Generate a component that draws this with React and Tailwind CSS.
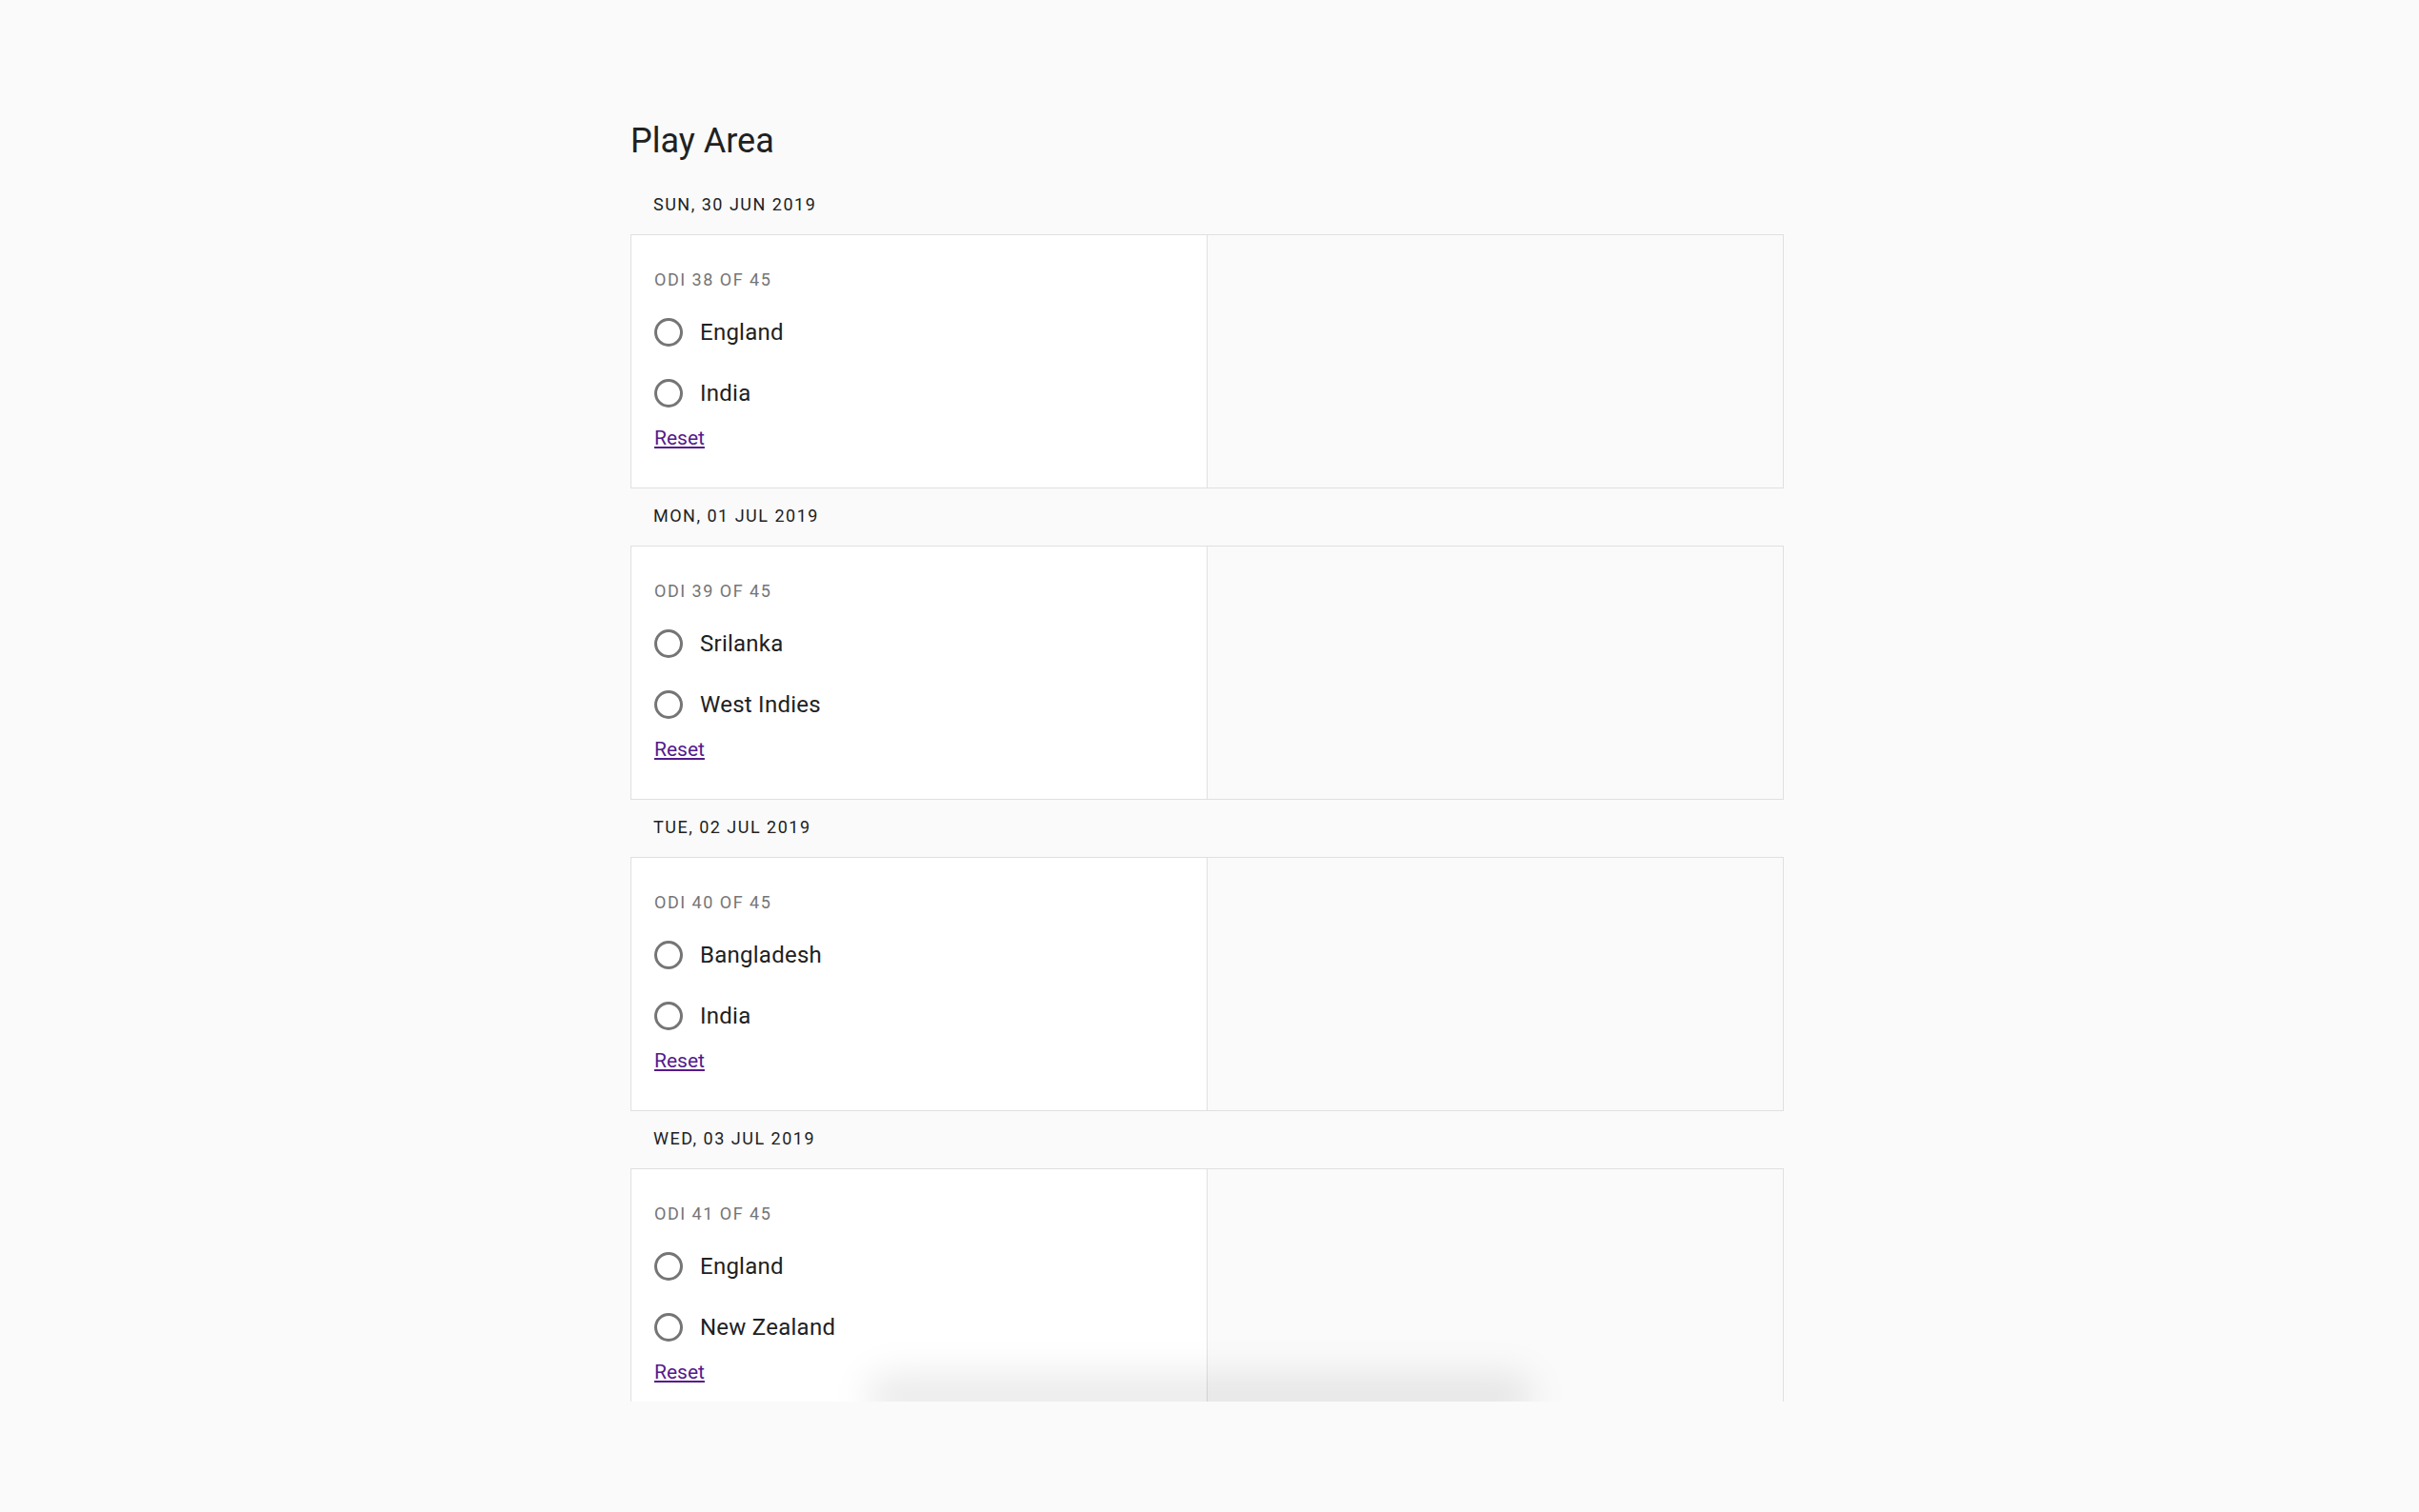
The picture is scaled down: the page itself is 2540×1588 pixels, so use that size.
import React from "react";

const matches = [
  { date: "SUN, 30 JUN 2019", odi: "ODI 38 OF 45", teams: ["England", "India"] },
  { date: "MON, 01 JUL 2019", odi: "ODI 39 OF 45", teams: ["Srilanka", "West Indies"] },
  { date: "TUE, 02 JUL 2019", odi: "ODI 40 OF 45", teams: ["Bangladesh", "India"] },
  { date: "WED, 03 JUL 2019", odi: "ODI 41 OF 45", teams: ["England", "New Zealand"] },
];

const Radio = ({ label }) => (
  <label className="flex items-center h-[64px] cursor-pointer">
    <span className="w-[30px] h-[30px] rounded-full border-[3px] border-[#757575] shrink-0" />
    <span className="ml-[18px] text-[24px] leading-[36px] tracking-[0.25px] text-[#212121]">{label}</span>
  </label>
);

const MatchCard = ({ match }) => (
  <div>
    <div className="pt-[15px] pb-[18px] pl-[24px] text-[18px] leading-[27px] tracking-[1.5px] text-[#212121]">
      {match.date}
    </div>
    <div className="grid grid-cols-[604px_1fr] h-[267px] border border-[#e0e0e0]">
      <div className="bg-white pl-[24px] pt-[33px]">
        <p className="text-[18px] leading-[27px] tracking-[1.5px] text-[#757575]">{match.odi}</p>
        <div className="mt-[10px]">
          {match.teams.map((team) => (
            <Radio key={team} label={team} />
          ))}
        </div>
        <a href="#" className="block w-fit text-[21px] leading-[31px] text-[#551a8b] underline">
          Reset
        </a>
      </div>
      <div className="bg-[#fafafa] border-l border-[#e0e0e0]" />
    </div>
  </div>
);

export default function App() {
  return (
    <div className="relative h-[1588px] overflow-hidden bg-[#fafafa] font-['Roboto',sans-serif]">
      <div className="ml-[662px] w-[1211px] pt-[121px]">
        <h1 className="text-[36px] leading-[54px] text-[#212121] font-normal mb-[11px]">Play Area</h1>
        {matches.map((match) => (
          <MatchCard key={match.odi} match={match} />
        ))}
      </div>
      {/* soft shadow cast by the bottom sheet */}
      <div className="absolute left-[910px] w-[700px] top-[1442px] h-[50px] rounded-full bg-black/[0.08] blur-[18px]" />
      {/* bottom sheet that hides the rest of the list */}
      <div className="absolute left-0 right-0 top-[1472px] bottom-0 bg-[#fafafa]" />
    </div>
  );
}
